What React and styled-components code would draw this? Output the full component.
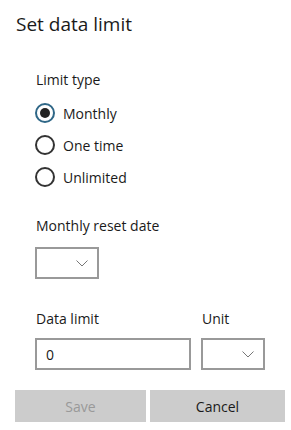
import React, { useState } from 'react';
import styled, { createGlobalStyle } from 'styled-components';

const GlobalStyle = createGlobalStyle`
  html, body {
    margin: 0;
    padding: 0;
    background: #ffffff;
  }
  body {
    font-family: 'Open Sans', 'Noto Sans', sans-serif;
    color: #1a1a1a;
  }
`;

const Dialog = styled.div`
  width: 291px;
  height: 430px;
  box-sizing: border-box;
  display: flex;
  flex-direction: column;
  background: #fff;
`;

const Title = styled.h1`
  margin: 0;
  padding: 10px 16px 0;
  font-size: 19px;
  font-weight: 400;
  line-height: 28px;
  color: #1a1a1a;
`;

const Form = styled.div`
  display: flex;
  flex-direction: column;
  padding: 32px 26px 0 35px;
`;

const Section = styled.div`
  display: flex;
  flex-direction: column;
  margin-bottom: ${(p) => p.$gap || 0}px;
`;

const Label = styled.div`
  font-size: 14px;
  line-height: 20px;
  padding-left: 1px;
  margin-bottom: ${(p) => p.$gap || 0}px;
`;

const RadioRow = styled.label`
  display: flex;
  align-items: center;
  gap: 8px;
  height: 32px;
  font-size: 14px;
  cursor: pointer;
`;

const RadioCircle = styled.span`
  width: 20px;
  height: 20px;
  box-sizing: border-box;
  border-radius: 50%;
  border: 2px solid ${(p) => (p.$checked ? '#2f6787' : '#333')};
  display: flex;
  align-items: center;
  justify-content: center;

  &::after {
    content: '';
    width: 10px;
    height: 10px;
    border-radius: 50%;
    background: #222;
    display: ${(p) => (p.$checked ? 'block' : 'none')};
  }
`;

const Select = styled.div`
  width: ${(p) => p.$width}px;
  height: 32px;
  box-sizing: border-box;
  border: 2px solid #999;
  display: flex;
  align-items: center;
  justify-content: flex-end;
  padding-right: 9px;
  background: #fff;
`;

const Row = styled.div`
  display: flex;
  gap: 10px;
`;

const Column = styled.div`
  display: flex;
  flex-direction: column;
`;

const Input = styled.input`
  width: 156px;
  height: 32px;
  box-sizing: border-box;
  border: 2px solid #999;
  padding: 0 9px;
  font-family: inherit;
  font-size: 14px;
  color: #1a1a1a;
  outline: none;
`;

const Buttons = styled.div`
  display: grid;
  grid-template-columns: 131px 135px;
  gap: 4px;
  padding: 20px 6px 0 15px;
`;

const Button = styled.button`
  height: 32px;
  border: none;
  background: #cccccc;
  font-family: inherit;
  font-size: 14px;
  color: ${(p) => (p.disabled ? '#999' : '#1a1a1a')};
  cursor: ${(p) => (p.disabled ? 'default' : 'pointer')};
`;

const Chevron = () => (
  <svg width="12" height="7" viewBox="0 0 12 7" fill="none">
    <path d="M0.5 0.5 L6 6 L11.5 0.5" stroke="#777" strokeWidth="1" />
  </svg>
);

const options = ['Monthly', 'One time', 'Unlimited'];

export default function App() {
  const [type, setType] = useState('Monthly');

  return (
    <Dialog>
      <GlobalStyle />
      <Title>Set data limit</Title>
      <Form>
        <Section $gap={23}>
          <Label $gap={7}>Limit type</Label>
          {options.map((o) => (
            <RadioRow key={o} onClick={() => setType(o)}>
              <RadioCircle $checked={type === o} />
              {o}
            </RadioRow>
          ))}
        </Section>
        <Section $gap={30}>
          <Label $gap={11}>Monthly reset date</Label>
          <Select $width={64}>
            <Chevron />
          </Select>
        </Section>
        <Row>
          <Column>
            <Label $gap={9}>Data limit</Label>
            <Input defaultValue="0" />
          </Column>
          <Column>
            <Label $gap={9}>Unit</Label>
            <Select $width={64}>
              <Chevron />
            </Select>
          </Column>
        </Row>
      </Form>
      <Buttons>
        <Button disabled>Save</Button>
        <Button>Cancel</Button>
      </Buttons>
    </Dialog>
  );
}
